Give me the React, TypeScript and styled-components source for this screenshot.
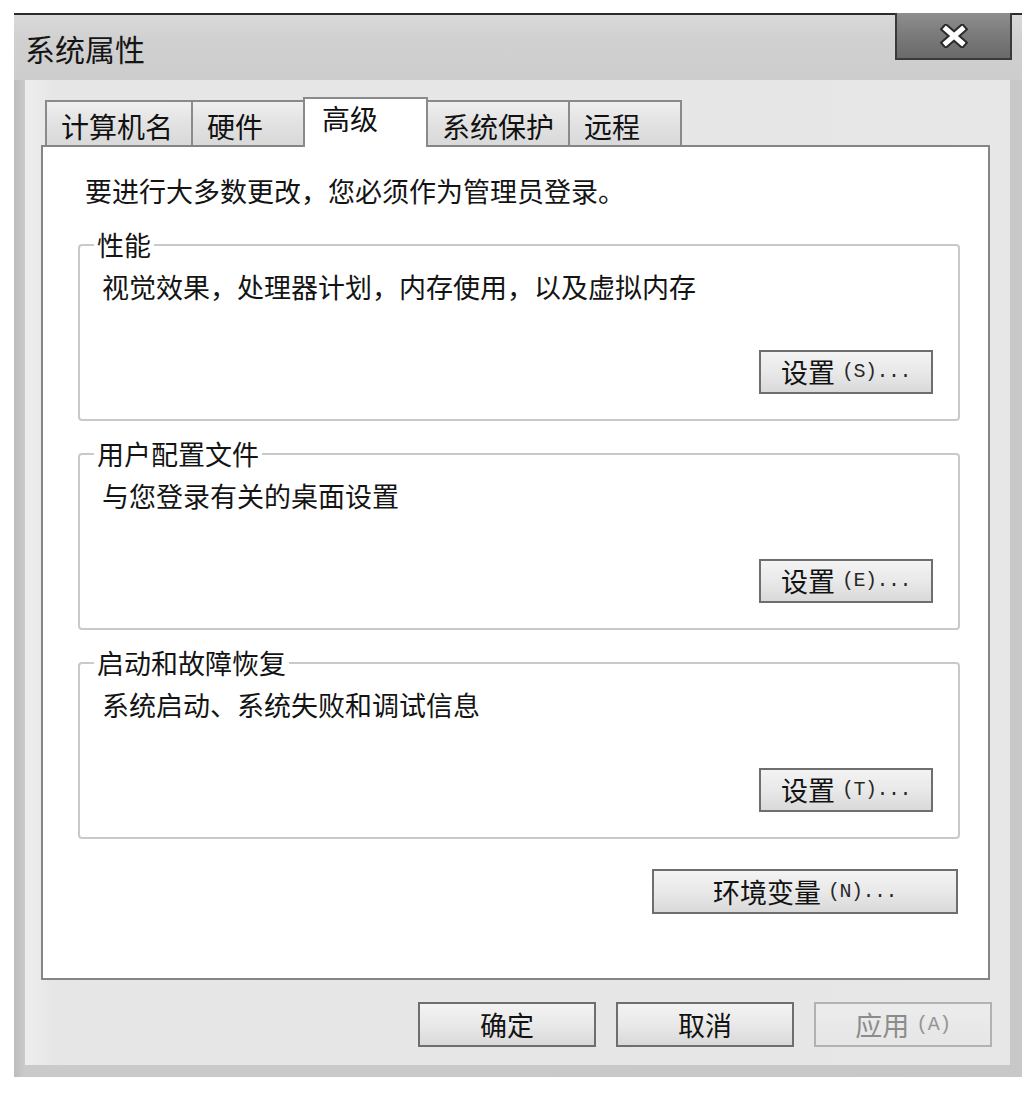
import React from 'react';
import styled, { createGlobalStyle } from 'styled-components';

const GlobalStyle = createGlobalStyle`
  html, body {
    margin: 0;
    padding: 0;
    background: #ffffff;
  }
  body {
    font-family: "Noto Sans CJK SC", "Noto Sans", sans-serif;
    color: #141414;
  }
  * { box-sizing: border-box; }
`;

const Window = styled.div`
  width: 1008px;
  height: 1064px;
  margin: 13px 0 0 14px;
  border-top: 2px solid #2c2c2c;
  background: #c6c6c6;
  display: flex;
  flex-direction: column;
`;

const TitleBar = styled.div`
  height: 65px;
  flex: none;
  display: flex;
  align-items: center;
  padding-left: 11px;
  background: linear-gradient(180deg, #d9d9d9 0%, #d0d0d0 40%, #cdcdcd 100%);
`;

const Title = styled.div`
  font-size: 30px;
  line-height: 36px;
  color: #151515;
`;

const CloseButton = styled.div`
  margin-left: auto;
  margin-right: 10px;
  align-self: flex-start;
  margin-top: -2px;
  width: 117px;
  height: 47px;
  border: 2px solid #3a3a3a;
  border-top-width: 0;
  background: linear-gradient(180deg, #8e8e8e 0%, #7a7a7a 50%, #6a6a6a 100%);
  display: flex;
  align-items: center;
  justify-content: center;
`;

const Frame = styled.div`
  flex: 1;
  display: flex;
  padding: 0 12px 12px 11px;
  background: linear-gradient(90deg, #bdbdbd 0px, #cacaca 11px, #c8c8c8 100%);
`;

const Client = styled.div`
  flex: 1;
  display: flex;
  flex-direction: column;
  background: linear-gradient(90deg, #ededed 0px, #e6e6e6 30px, #e7e7e7 100%);
  padding: 17px 20px 18px 16px;
`;

const TabRow = styled.div`
  display: flex;
  align-items: flex-end;
  padding-left: 4px;
  margin-bottom: -2px;
  position: relative;
  z-index: 1;
`;

const Tab = styled.div<{ $active?: boolean; $w: number }>`
  width: ${(p) => p.$w}px;
  height: ${(p) => (p.$active ? 50 : 45)}px;
  margin-bottom: ${(p) => (p.$active ? 0 : 2)}px;
  margin-left: -2px;
  &:first-child { margin-left: 0; }
  border: 2px solid #8a8a8a;
  border-bottom: none;
  background: ${(p) =>
    p.$active ? '#ffffff' : 'linear-gradient(180deg, #efefef 0%, #e2e2e2 50%, #d9d9d9 100%)'};
  position: relative;
  z-index: ${(p) => (p.$active ? 2 : 1)};
  padding: ${(p) => (p.$active ? '1px 0 0 17px' : '6px 0 0 14px')};
  font-size: 28px;
  line-height: 36px;
  white-space: nowrap;
  color: #111;
`;

const Panel = styled.div`
  flex: 1;
  background: #ffffff;
  border: 2px solid #858585;
  padding: 29px 28px 0 35px;
  display: flex;
  flex-direction: column;
`;

const Notice = styled.div`
  font-size: 27px;
  line-height: 30px;
  margin: 0 0 24px 7px;
  white-space: nowrap;
`;

const Group = styled.fieldset<{ $gapAfter?: number }>`
  margin: 0 0 ${(p) => p.$gapAfter ?? 0}px 0;
  border: 2px solid #c9c9c9;
  border-radius: 4px;
  padding: 12px 25px 25px 22px;
  min-width: 0;
  display: flex;
  flex-direction: column;
`;

const Legend = styled.legend`
  padding: 0 3px;
  margin-left: -8px;
  font-size: 27px;
  line-height: 30px;
  white-space: nowrap;
`;

const Description = styled.div`
  font-size: 27px;
  line-height: 30px;
  white-space: nowrap;
`;

const Button = styled.div<{ $w: number; $disabled?: boolean }>`
  width: ${(p) => p.$w}px;
  height: 45px;
  flex: none;
  display: flex;
  align-items: center;
  justify-content: center;
  font-size: 27px;
  line-height: 30px;
  white-space: nowrap;
  border: 2px solid ${(p) => (p.$disabled ? '#b2b2b2' : '#6e6e6e')};
  background: ${(p) =>
    p.$disabled
      ? 'linear-gradient(180deg, #ececec 0%, #e6e6e6 100%)'
      : 'linear-gradient(180deg, #f3f3f3 0%, #e9e9e9 50%, #d9d9d9 100%)'};
  color: ${(p) => (p.$disabled ? '#8c8c8c' : '#121212')};
`;

const GroupButton = styled(Button)`
  align-self: flex-end;
  margin-top: 48px;
  height: 44px;
`;

const EnvButton = styled(Button)`
  align-self: flex-end;
  margin-top: 30px;
  margin-right: 2px;
`;

const Accel = styled.span`
  font-family: "Liberation Mono", "DejaVu Sans Mono", monospace;
  font-size: 20px;
  margin-left: 7px;
  letter-spacing: -0.5px;
  color: inherit;
  opacity: 0.9;
`;

const Footer = styled.div`
  margin-top: 22px;
  display: flex;
  justify-content: flex-end;
  gap: 20px;
  margin-right: -2px;
`;

const CloseIcon = () => (
  <svg width="28" height="24" viewBox="0 0 28 24">
    <path d="M6 5 L22 19 M22 5 L6 19" stroke="#2a2a2a" strokeWidth="9" strokeLinecap="square" />
    <path d="M6 5 L22 19 M22 5 L6 19" stroke="#ffffff" strokeWidth="5" strokeLinecap="square" />
  </svg>
);

const tabs = [
  { label: '计算机名', w: 148 },
  { label: '硬件', w: 114 },
  { label: '高级', w: 125, active: true },
  { label: '系统保护', w: 144 },
  { label: '远程', w: 114 },
];

const groups = [
  { legend: '性能', desc: '视觉效果，处理器计划，内存使用，以及虚拟内存', key: 'S' },
  { legend: '用户配置文件', desc: '与您登录有关的桌面设置', key: 'E' },
  { legend: '启动和故障恢复', desc: '系统启动、系统失败和调试信息', key: 'T' },
];

export default function App() {
  return (
    <>
      <GlobalStyle />
      <Window>
        <TitleBar>
          <Title>系统属性</Title>
          <CloseButton>
            <CloseIcon />
          </CloseButton>
        </TitleBar>
        <Frame>
          <Client>
            <TabRow>
              {tabs.map((t) => (
                <Tab key={t.label} $w={t.w} $active={t.active}>
                  {t.label}
                </Tab>
              ))}
            </TabRow>
            <Panel>
              <Notice>要进行大多数更改，您必须作为管理员登录。</Notice>
              {groups.map((g, i) => (
                <Group key={g.legend} $gapAfter={i < groups.length - 1 ? 18 : 0}>
                  <Legend>{g.legend}</Legend>
                  <Description>{g.desc}</Description>
                  <GroupButton $w={174}>
                    设置<Accel>({g.key})...</Accel>
                  </GroupButton>
                </Group>
              ))}
              <EnvButton $w={306}>
                环境变量<Accel>(N)...</Accel>
              </EnvButton>
            </Panel>
            <Footer>
              <Button $w={178}>确定</Button>
              <Button $w={178}>取消</Button>
              <Button $w={178} $disabled>
                应用<Accel>(A)</Accel>
              </Button>
            </Footer>
          </Client>
        </Frame>
      </Window>
    </>
  );
}
